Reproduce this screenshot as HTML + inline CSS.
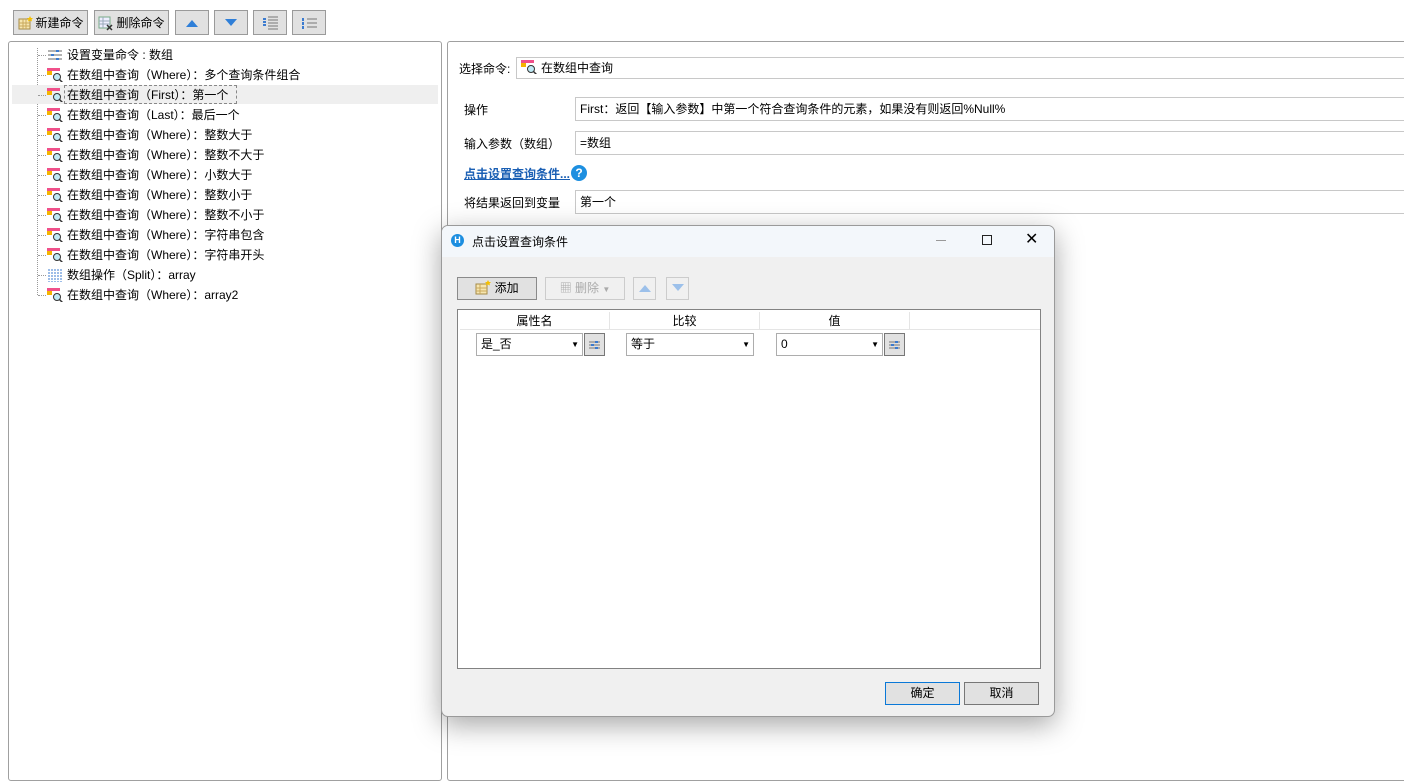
<!DOCTYPE html>
<html><head><meta charset="utf-8"><style>
*{box-sizing:border-box;margin:0;padding:0}
body{width:1404px;height:770px;overflow:hidden;background:#fff;font-family:"Liberation Sans","Noto Sans CJK SC",sans-serif;font-size:12px;color:#000;position:relative}
.a{position:absolute}
.tb{position:absolute;top:10px;height:25px;border:1px solid #9a9a9a;background:#e1e1e1;display:flex;align-items:center;justify-content:center;gap:2px;font-size:12px}
.ico{display:inline-block;width:14px;height:14px;position:relative}
.q{position:absolute;width:16px;height:14px}
.row{position:absolute;left:67px;height:18px;line-height:18px;white-space:nowrap}
.inp{position:absolute;border:1px solid #c8c8c8;background:#fff;height:22px;line-height:20px;padding-left:4px;white-space:nowrap}
.btn{position:absolute;border:1px solid #8a8a8a;background:#e1e1e1;text-align:center;line-height:21px}
.sel{position:absolute;border:1px solid #adadad;background:#fff;height:23px;line-height:21px;padding-left:4px}
.sel:after{content:"▼";position:absolute;right:3px;top:0;font-size:8px}
.cfg{position:absolute;width:21px;height:23px;border:1px solid #777;background:#e1e1e1}
</style></head><body>
<!-- toolbar -->
<div class="tb" style="left:13px;width:75px"><svg width="16" height="16"><rect x="2" y="4" width="11" height="10" fill="#f6e6b0" stroke="#a58a48"/><path d="M2 8h11M2 11h11M6 4v10M9 4v10" stroke="#c9a85c"/><path d="M13 1l1 2 2 0-1.5 1.5.5 2-2-1-2 1 .5-2L10 3h2z" fill="#f5c000"/></svg>新建命令</div>
<div class="tb" style="left:94px;width:75px"><svg width="16" height="16"><rect x="1" y="2" width="11" height="11" fill="#eef" stroke="#7a8"/><path d="M1 6h11M1 9h11M5 2v11" stroke="#9ab"/><path d="M9 10l5 5M14 10l-5 5" stroke="#333" stroke-width="1.5"/></svg>删除命令</div>
<div class="tb" style="left:175px;width:34px"><svg width="12" height="8"><path d="M0 8L6 1 12 8z" fill="#2f7fd8"/></svg></div>
<div class="tb" style="left:214px;width:34px"><svg width="12" height="8"><path d="M0 0L6 7 12 0z" fill="#2f7fd8"/></svg></div>
<div class="tb" style="left:253px;width:34px"><svg width="16" height="14"><path d="M6 1h10M6 4h10M6 7h10M6 10h10M6 13h10" stroke="#777"/><path d="M1 3h3M1 6h3M1 9h3" stroke="#3b7bd0" stroke-width="2"/></svg></div>
<div class="tb" style="left:292px;width:34px"><svg width="16" height="14"><path d="M6 3h10M6 7h10M6 11h10" stroke="#777"/><path d="M2 2v3M2 6v3M2 10v3" stroke="#3b7bd0" stroke-width="2"/></svg></div>
<!-- left tree -->
<div class="a" style="left:8px;top:41px;width:434px;height:740px;border:1px solid #a0a0a0;border-radius:3px"></div>
<div class="a" style="left:37px;top:48px;width:0;height:247px;border-left:1px dotted #999"></div>
<div class="a" style="left:12px;top:85px;width:426px;height:19px;background:#efefef"></div>
<div class="a" style="left:64px;top:85px;width:173px;height:19px;border:1px dashed #888"></div>
<div id="tree"></div>
<!-- right panel -->
<div class="a" style="left:447px;top:41px;width:970px;height:740px;border:1px solid #a0a0a0;border-radius:3px"></div>
<div class="a" style="left:459px;top:60px">选择命令:</div>
<div class="inp" style="left:516px;top:57px;width:900px;padding-left:24px">在数组中查询</div>
<div class="a" style="left:464px;top:101px">操作</div>
<div class="inp" style="left:575px;top:97px;width:840px;height:24px;line-height:22px">First：返回【输入参数】中第一个符合查询条件的元素，如果没有则返回%Null%</div>
<div class="a" style="left:464px;top:135px">输入参数（数组）</div>
<div class="inp" style="left:575px;top:131px;width:840px;height:24px;line-height:22px">=数组</div>
<div class="a" style="left:464px;top:165px;color:#1a5fb4;font-weight:bold;text-decoration:underline">点击设置查询条件...</div>
<div class="a" style="left:571px;top:165px;width:16px;height:16px;border-radius:50%;background:#1d8fe0;color:#fff;font-weight:bold;text-align:center;line-height:16px;font-size:12px">?</div>
<div class="a" style="left:464px;top:194px">将结果返回到变量</div>
<div class="inp" style="left:575px;top:190px;width:840px;height:24px;line-height:22px">第一个</div>
<!-- dialog -->
<div class="a" style="left:441px;top:225px;width:614px;height:492px;background:#f0f0f0;border:1px solid #9a9a9a;border-radius:7px;box-shadow:0 8px 28px rgba(0,0,0,.35);overflow:hidden">
 <div class="a" style="left:0;top:0;width:614px;height:31px;background:#f3f7fb"></div>
 <div class="a" style="left:9px;top:8px;width:13px;height:13px;border-radius:50%;background:#1c8ee0;color:#fff;font-size:9px;text-align:center;line-height:13px;font-weight:bold">H</div>
 <div class="a" style="left:30px;top:7px">点击设置查询条件</div>
 <div class="a" style="left:494px;top:14px;width:10px;border-top:1px solid #999"></div>
 <div class="a" style="left:540px;top:9px;width:10px;height:10px;border:1px solid #222"></div>
 <div class="a" style="left:583px;top:3px;font-size:16px">✕</div>
 <div class="btn" style="left:15px;top:51px;width:80px;height:23px"><svg width="16" height="15" style="vertical-align:-3px"><rect x="1" y="4" width="11" height="10" fill="#f6e6b0" stroke="#a58a48"/><path d="M1 8h11M1 11h11M5 4v10" stroke="#c9a85c"/><path d="M13 0l1 2 2 0-1.5 1.5.5 2-2-1-2 1 .5-2L10 2h2z" fill="#f5c000"/></svg> 添加</div>
 <div class="btn" style="left:103px;top:51px;width:80px;height:23px;border-color:#ccc;color:#aaa;background:#f0f0f0">▦ 删除 <span style="font-size:8px">▼</span></div>
 <div class="btn" style="left:191px;top:51px;width:23px;height:23px;border-color:#ccc;background:#f0f0f0"><svg width="12" height="8"><path d="M0 8L6 1 12 8z" fill="#9cc0ea"/></svg></div>
 <div class="btn" style="left:224px;top:51px;width:23px;height:23px;border-color:#ccc;background:#f0f0f0"><svg width="12" height="8"><path d="M0 0L6 7 12 0z" fill="#9cc0ea"/></svg></div>
 <div class="a" style="left:15px;top:83px;width:584px;height:360px;background:#fff;border:1px solid #828282"></div>
 <div class="a" style="left:18px;top:86px;width:580px;height:18px;border-bottom:1px solid #e5e5e5"></div>
 <div class="a" style="left:18px;top:86px;width:150px;height:18px;text-align:center;border-right:1px solid #e5e5e5">属性名</div>
 <div class="a" style="left:168px;top:86px;width:150px;height:18px;text-align:center;border-right:1px solid #e5e5e5">比较</div>
 <div class="a" style="left:318px;top:86px;width:150px;height:18px;text-align:center;border-right:1px solid #e5e5e5">值</div>
 <div class="sel" style="left:34px;top:107px;width:107px">是_否</div>
 <div class="cfg" style="left:142px;top:107px"><svg width="19" height="21"><path d="M4 8h11M4 11h11M4 14h11" stroke="#777"/><path d="M10 8h3M6 11h3M10 14h3" stroke="#3b7bd0" stroke-width="2"/></svg></div>
 <div class="sel" style="left:184px;top:107px;width:128px">等于</div>
 <div class="sel" style="left:334px;top:107px;width:107px">0</div>
 <div class="cfg" style="left:442px;top:107px"><svg width="19" height="21"><path d="M4 8h11M4 11h11M4 14h11" stroke="#777"/><path d="M10 8h3M6 11h3M10 14h3" stroke="#3b7bd0" stroke-width="2"/></svg></div>
 <div class="btn" style="left:443px;top:456px;width:75px;height:23px;border-color:#0a78d7">确定</div>
 <div class="btn" style="left:522px;top:456px;width:75px;height:23px;border-color:#777">取消</div>
</div>
<script>
var items=["设置变量命令 : 数组","在数组中查询（Where）：多个查询条件组合","在数组中查询（First）：第一个","在数组中查询（Last）：最后一个","在数组中查询（Where）：整数大于","在数组中查询（Where）：整数不大于","在数组中查询（Where）：小数大于","在数组中查询（Where）：整数小于","在数组中查询（Where）：整数不小于","在数组中查询（Where）：字符串包含","在数组中查询（Where）：字符串开头","数组操作（Split）：array","在数组中查询（Where）：array2"];
var h="";items.forEach(function(t,i){var y=46+i*20;
h+='<div class="a" style="left:38px;top:'+(y+9)+'px;width:8px;border-top:1px dotted #999"></div>';
var ic;
if(i==0)ic='<svg class="q" style="left:47px;top:'+(y+2)+'px"><path d="M1 3h14M1 7h14M1 11h14" stroke="#666"/><path d="M9 3h3M4 7h3M9 11h3" stroke="#3b7bd0" stroke-width="2"/></svg>';
else if(i==11)ic='<svg class="q" style="left:47px;top:'+(y+2)+'px"><path d="M2 1v13M5 1v13M8 1v13M11 1v13M14 1v13" stroke="#3b7bd0" stroke-dasharray="2 1"/></svg>';
else ic='<svg class="q" style="left:47px;top:'+(y+2)+'px"><rect x="0" y="0" width="13" height="3" fill="#f0508a"/><rect x="0" y="3" width="5" height="4" fill="#f5b400"/><circle cx="10" cy="9" r="3.5" fill="#bfeaf5" stroke="#333"/><path d="M12.5 11.5l3 3" stroke="#333" stroke-width="1.5"/></svg>';
h+=ic+'<div class="row" style="top:'+y+'px">'+t+'</div>';});
document.getElementById("tree").innerHTML=h;
</script>
<svg class="q" style="left:521px;top:60px"><rect x="0" y="0" width="13" height="3" fill="#f0508a"/><rect x="0" y="3" width="5" height="4" fill="#f5b400"/><circle cx="10" cy="9" r="3.5" fill="#bfeaf5" stroke="#333"/><path d="M12.5 11.5l3 3" stroke="#333" stroke-width="1.5"/></svg>
</body></html>
